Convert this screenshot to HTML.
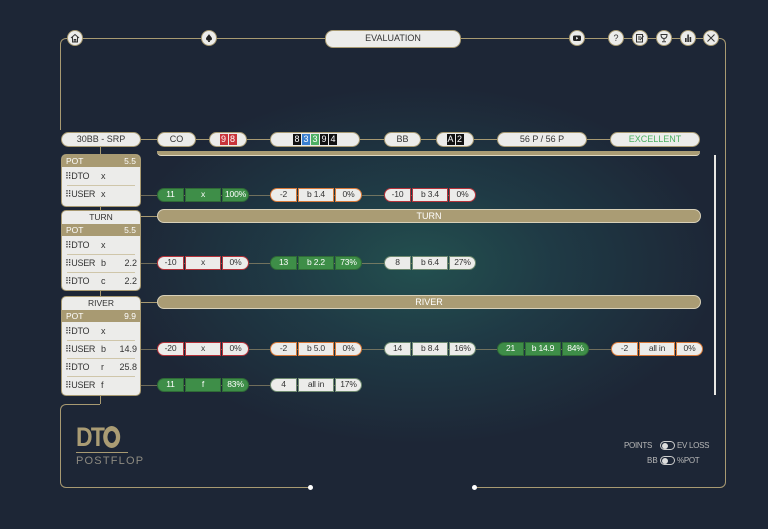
<!DOCTYPE html>
<html><head><meta charset="utf-8"><style>
*{margin:0;padding:0;box-sizing:border-box}
body{width:768px;height:529px;overflow:hidden;background:#1d2636;font-family:"Liberation Sans",sans-serif;position:relative}
.bg{position:absolute;left:0;top:0;width:768px;height:529px;background:radial-gradient(ellipse 300px 180px at 420px 265px,#23504f 0%,#1f3a45 45%,#1d2636 100%)}
.a{position:absolute}
.pill{position:absolute;height:15px;border-radius:8px;background:#ececea;border:1.5px solid #a89a72;font-size:9px;color:#333;text-align:center;line-height:12px}
.ln{position:absolute;background:#a89a72}
.grp{position:absolute;height:14px;display:flex;gap:1px}
.grp div{height:14px;font-size:8.5px;line-height:11px;text-align:center;border:1.5px solid;color:#333;background:#ececea;letter-spacing:-.2px}
.grp div:first-child{width:27px;border-radius:7px 0 0 7px}
.grp div:nth-child(2){width:36px}
.grp div:last-child{width:27px;border-radius:0 7px 7px 0}
.g div{background:#3e8e48;border-color:#2f6a36;color:#fff}
.o div{border-color:#d87a3a}
.r div{border-color:#b5333a}
.w div{border-color:#6f8a70}
.bar{position:absolute;left:157px;width:544px;height:14px;border-radius:7px;background:#aa9c74;border:1px solid #d8d0b8;color:#fff;font-size:9px;text-align:center;line-height:12px}
.panel{position:absolute;left:61px;width:80px;background:#ececea;border:1px solid #a89a72;border-radius:5px;overflow:hidden;font-size:9px;color:#333}
.panel .t{text-align:center;height:13px;line-height:13px;font-size:8.5px}
.panel .p{background:#a89a72;color:#fff;height:12px;line-height:12px;padding:0 4px;font-size:8.5px;display:flex;justify-content:space-between}
.panel .row{height:18px;line-height:18px;padding:0 3px;display:flex;position:relative}
.panel .row+.row:before{content:"";position:absolute;left:5px;right:5px;top:0;border-top:1px solid #cfc6aa}
.row span.n{width:36px;letter-spacing:-.3px}.row span.m{width:14px}.row span.v{flex:1;text-align:right}
.ic{position:absolute;width:16px;height:16px;border-radius:50%;background:#ececea;border:1px solid #a89a72;top:30px}
.ic svg{position:absolute;left:2px;top:2px}
.c{display:inline-block;width:8px;height:11px;line-height:11px;color:#fff;font-size:9px;margin:0 .5px;vertical-align:middle}
</style></head><body>
<div class="bg"></div>
<div class="ln" style="left:75px;top:38px;width:645px;height:1px"></div>
<div class="a" style="left:60px;top:38px;width:15px;height:92px;border-left:1px solid #a89a72;border-top:1px solid #a89a72;border-radius:6px 0 0 0"></div>
<div class="a" style="left:715px;top:38px;width:11px;height:450px;border-right:1px solid #a89a72;border-top:1px solid #a89a72;border-bottom:1px solid #a89a72;border-radius:0 6px 6px 0"></div>
<div class="a" style="left:60px;top:404px;width:40px;height:84px;border-left:1px solid #a89a72;border-top:1px solid #a89a72;border-bottom:1px solid #a89a72;border-radius:6px 0 0 6px"></div>
<div class="a" style="left:100px;top:396px;width:1px;height:8px;background:#a89a72"></div>
<div class="ln" style="left:100px;top:487px;width:210px;height:1px"></div>
<div class="ln" style="left:474px;top:487px;width:245px;height:1px"></div>
<div class="a" style="left:308px;top:485px;width:5px;height:5px;border-radius:50%;background:#fff"></div>
<div class="a" style="left:472px;top:485px;width:5px;height:5px;border-radius:50%;background:#fff"></div>
<div class="a" style="left:714px;top:155px;width:2px;height:240px;background:#e8e8e4"></div>
<!-- top icons -->
<div class="ic" style="left:67px"><svg width="10" height="10" viewBox="0 0 10 10" fill="none" stroke="#333" stroke-width="1"><path d="M1 5L5 1.5L9 5M2.5 4V9H7.5V4M4.2 9V6.5H5.8V9"/></svg></div>
<div class="ic" style="left:201px"><svg width="10" height="10" viewBox="0 0 10 10"><path d="M5 1C4 3 2 4 2 6A1.8 1.8 0 0 0 5 7A1.8 1.8 0 0 0 8 6C8 4 6 3 5 1ZM4.5 7L4 9H6L5.5 7Z" fill="#222"/></svg></div>
<div class="pill" style="left:325px;top:30px;width:136px;height:18px;line-height:15px">EVALUATION</div>
<div class="ic" style="left:569px"><svg width="10" height="10" viewBox="0 0 10 10"><rect x="1" y="2.5" width="8" height="5.5" rx="1.5" fill="#222"/><path d="M4.2 3.8L6.2 5.2L4.2 6.6Z" fill="#fff"/></svg></div>
<div class="ic" style="left:608px;font-size:9px;color:#333;text-align:center;line-height:14px">?</div>
<div class="ic" style="left:632px"><svg width="10" height="10" viewBox="0 0 10 10" fill="none" stroke="#333" stroke-width="1"><rect x="1.5" y="1.5" width="6" height="7.5"/><path d="M3 4H6M3 6H5M5 7L8.5 3"/></svg></div>
<div class="ic" style="left:656px"><svg width="10" height="10" viewBox="0 0 10 10" fill="none" stroke="#333" stroke-width="1"><path d="M2 1.5H8C8 4 7 5.5 5 5.5C3 5.5 2 4 2 1.5ZM5 5.5V8M3 8.8H7"/></svg></div>
<div class="ic" style="left:680px"><svg width="10" height="10" viewBox="0 0 10 10" fill="#333"><rect x="2" y="5" width="1.6" height="4"/><rect x="4.3" y="1.5" width="1.6" height="7.5"/><rect x="6.6" y="4" width="1.6" height="5"/></svg></div>
<div class="ic" style="left:703px"><svg width="10" height="10" viewBox="0 0 10 10" stroke="#333" stroke-width="1"><path d="M1.5 1.5L8.5 8.5M8.5 1.5L1.5 8.5"/></svg></div>
<!-- top row -->
<div class="ln" style="left:100px;top:139px;width:600px;height:1px"></div>
<div class="ln" style="left:100px;top:147px;width:1px;height:8px"></div>
<div class="pill" style="left:61px;top:132px;width:80px">30BB - SRP</div>
<div class="pill" style="left:157px;top:132px;width:39px">CO</div>
<div class="pill" style="left:209px;top:132px;width:38px"><span class="c" style="background:#c9343a">9</span><span class="c" style="background:#c9343a">8</span></div>
<div class="pill" style="left:270px;top:132px;width:90px"><span class="c" style="background:#111">8</span><span class="c" style="background:#3a7fcf">3</span><span class="c" style="background:#4caf62">3</span><span class="c" style="background:#111">9</span><span class="c" style="background:#111">4</span></div>
<div class="pill" style="left:384px;top:132px;width:37px">BB</div>
<div class="pill" style="left:436px;top:132px;width:38px"><span class="c" style="background:#111">A</span><span class="c" style="background:#111">2</span></div>
<div class="pill" style="left:497px;top:132px;width:90px">56 P / 56 P</div>
<div class="pill" style="left:610px;top:132px;width:90px;color:#4caf62">EXCELLENT</div>
<div class="a" style="left:157px;top:151px;width:543px;height:5px;background:#aa9c74;border-radius:0 0 4px 4px;border-bottom:1px solid #e0d8c0"></div>
<div class="bar" style="top:209px">TURN</div>
<div class="bar" style="top:295px">RIVER</div>
<div class="ln" style="left:141px;top:216px;width:16px;height:1px"></div>
<div class="ln" style="left:141px;top:302px;width:16px;height:1px"></div>
<div class="ln" style="left:100px;top:206px;width:1px;height:4px"></div>
<div class="ln" style="left:100px;top:290px;width:1px;height:6px"></div>
<!-- panels -->
<div class="panel" style="top:154px;height:53px"><div class="p"><span>POT</span><span>5.5</span></div>
<div class="row"><span class="n">⠿DTO</span><span class="m">x</span><span class="v"></span></div>
<div class="row"><span class="n">⠿USER</span><span class="m">x</span><span class="v"></span></div></div>
<div class="panel" style="top:210px;height:81px"><div class="t">TURN</div><div class="p"><span>POT</span><span>5.5</span></div>
<div class="row"><span class="n">⠿DTO</span><span class="m">x</span><span class="v"></span></div>
<div class="row"><span class="n">⠿USER</span><span class="m">b</span><span class="v">2.2</span></div>
<div class="row"><span class="n">⠿DTO</span><span class="m">c</span><span class="v">2.2</span></div></div>
<div class="panel" style="top:296px;height:100px"><div class="t">RIVER</div><div class="p"><span>POT</span><span>9.9</span></div>
<div class="row"><span class="n">⠿DTO</span><span class="m">x</span><span class="v"></span></div>
<div class="row"><span class="n">⠿USER</span><span class="m">b</span><span class="v">14.9</span></div>
<div class="row"><span class="n">⠿DTO</span><span class="m">r</span><span class="v">25.8</span></div>
<div class="row"><span class="n">⠿USER</span><span class="m">f</span><span class="v"></span></div></div>
<div class="ln" style="left:141px;top:195px;width:333px;height:1px;opacity:.6"></div>
<div class="ln" style="left:141px;top:263px;width:333px;height:1px;opacity:.6"></div>
<div class="ln" style="left:141px;top:349px;width:560px;height:1px;opacity:.6"></div>
<div class="ln" style="left:141px;top:385px;width:220px;height:1px;opacity:.6"></div>
<div class="grp g" style="left:157px;top:188px"><div>11</div><div>x</div><div>100%</div></div>
<div class="grp o" style="left:270px;top:188px"><div>-2</div><div>b 1.4</div><div>0%</div></div>
<div class="grp r" style="left:384px;top:188px"><div>-10</div><div>b 3.4</div><div>0%</div></div>
<div class="grp r" style="left:157px;top:256px"><div>-10</div><div>x</div><div>0%</div></div>
<div class="grp g" style="left:270px;top:256px"><div>13</div><div>b 2.2</div><div>73%</div></div>
<div class="grp w" style="left:384px;top:256px"><div>8</div><div>b 6.4</div><div>27%</div></div>
<div class="grp r" style="left:157px;top:342px"><div>-20</div><div>x</div><div>0%</div></div>
<div class="grp o" style="left:270px;top:342px"><div>-2</div><div>b 5.0</div><div>0%</div></div>
<div class="grp w" style="left:384px;top:342px"><div>14</div><div>b 8.4</div><div>16%</div></div>
<div class="grp g" style="left:497px;top:342px"><div>21</div><div>b 14.9</div><div>84%</div></div>
<div class="grp o" style="left:611px;top:342px"><div>-2</div><div>all in</div><div>0%</div></div>
<div class="grp g" style="left:157px;top:378px"><div>11</div><div>f</div><div>83%</div></div>
<div class="grp w" style="left:270px;top:378px"><div>4</div><div>all in</div><div>17%</div></div>
<!-- logo -->
<div class="a" style="left:76px;top:424px;font-size:27px;font-weight:bold;color:#aa9c74;letter-spacing:-2px;line-height:26px;transform:scaleX(.85);transform-origin:left">DT<span style="display:inline-block;width:20px;height:22px;border-radius:50%;border:5px solid #aa9c74;vertical-align:-2px;position:relative"></span></div>
<div class="ln" style="left:76px;top:452px;width:52px;height:1px"></div>
<div class="a" style="left:76px;top:455px;font-size:11px;color:#8d8a80;letter-spacing:1.2px">POSTFLOP</div>
<div class="a" style="left:624px;top:441px;font-size:8px;color:#b8b8b8;letter-spacing:-.3px">POINTS</div>
<div class="a" style="left:660px;top:441px;width:15px;height:9px;border:1px solid #ccc;border-radius:5px"><div style="width:6px;height:6px;border-radius:50%;background:#ddd;margin:1px"></div></div>
<div class="a" style="left:677px;top:441px;font-size:8px;color:#b8b8b8;letter-spacing:-.3px">EV LOSS</div>
<div class="a" style="left:647px;top:456px;font-size:8px;color:#b8b8b8">BB</div>
<div class="a" style="left:660px;top:456px;width:15px;height:9px;border:1px solid #ccc;border-radius:5px"><div style="width:6px;height:6px;border-radius:50%;background:#ddd;margin:1px"></div></div>
<div class="a" style="left:677px;top:456px;font-size:8px;color:#b8b8b8;letter-spacing:-.3px">%POT</div>
</body></html>
